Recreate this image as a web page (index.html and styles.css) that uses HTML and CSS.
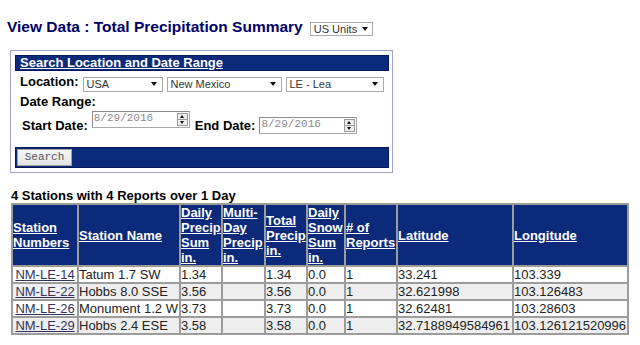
FILE: index.html
```html
<!DOCTYPE html>
<html lang="en">
<head>
<meta charset="utf-8">
<title>View Data : Total Precipitation Summary</title>
<link rel="stylesheet" href="styles.css">
</head>
<body>
<div class="title-row">
  <h1 class="title">View Data : Total Precipitation Summary</h1>
  <span class="sel sel-units">US Units<i class="arrow"></i></span>
</div>

<div class="search-box">
  <div class="box-head"><a href="#" class="head-link">Search Location and Date Range</a></div>
  <div class="row-loc">
    <span class="label">Location:</span>
    <span class="sel sel-country">USA<i class="arrow"></i></span>
    <span class="sel sel-state">New Mexico<i class="arrow"></i></span>
    <span class="sel sel-county">LE - Lea<i class="arrow"></i></span>
  </div>
  <div class="row-range"><span class="label">Date Range:</span></div>
  <div class="row-dates">
    <span class="label lbl-start">Start Date:</span>
    <span class="date date-start">8/29/2016<span class="spin"><i class="up"></i><i class="down"></i></span></span>
    <span class="label lbl-end">End Date:</span>
    <span class="date date-end">8/29/2016<span class="spin"><i class="up"></i><i class="down"></i></span></span>
  </div>
  <div class="box-foot"><button class="btn" type="button">Search</button></div>
</div>

<div class="count">4 Stations with 4 Reports over 1 Day</div>

<table class="data">
  <thead>
    <tr>
      <th class="c1"><a href="#">Station Numbers</a></th>
      <th class="c2"><a href="#">Station Name</a></th>
      <th class="c3"><a href="#">Daily Precip Sum in.</a></th>
      <th class="c4"><a href="#">Multi-Day Precip in.</a></th>
      <th class="c5"><a href="#">Total Precip in.</a></th>
      <th class="c6"><a href="#">Daily Snow Sum in.</a></th>
      <th class="c7"><a href="#"># of Reports</a></th>
      <th class="c8"><a href="#">Latitude</a></th>
      <th class="c9"><a href="#">Longitude</a></th>
    </tr>
  </thead>
  <tbody>
    <tr>
      <td class="num"><a href="#">NM-LE-14</a></td>
      <td>Tatum 1.7 SW</td>
      <td>1.34</td>
      <td></td>
      <td>1.34</td>
      <td>0.0</td>
      <td>1</td>
      <td>33.241</td>
      <td>103.339</td>
    </tr>
    <tr class="alt">
      <td class="num"><a href="#">NM-LE-22</a></td>
      <td>Hobbs 8.0 SSE</td>
      <td>3.56</td>
      <td></td>
      <td>3.56</td>
      <td>0.0</td>
      <td>1</td>
      <td>32.621998</td>
      <td>103.126483</td>
    </tr>
    <tr>
      <td class="num"><a href="#">NM-LE-26</a></td>
      <td>Monument 1.2 W</td>
      <td>3.73</td>
      <td></td>
      <td>3.73</td>
      <td>0.0</td>
      <td>1</td>
      <td>32.62481</td>
      <td>103.28603</td>
    </tr>
    <tr class="alt">
      <td class="num"><a href="#">NM-LE-29</a></td>
      <td>Hobbs 2.4 ESE</td>
      <td>3.58</td>
      <td></td>
      <td>3.58</td>
      <td>0.0</td>
      <td>1</td>
      <td>32.7188949584961</td>
      <td>103.126121520996</td>
    </tr>
  </tbody>
</table>
</body>
</html>
```

FILE: styles.css
```css
html, body {
  margin: 0;
  padding: 0;
  background: #ffffff;
}
body {
  font-family: "Liberation Sans", Arial, sans-serif;
  color: #000;
}

/* title */
.title-row {
  display: flex;
  align-items: flex-start;
  margin: 18px 0 0 7px;
  height: 18px;
}
.title {
  margin: 0;
  font-size: 15.5px;
  line-height: 18px;
  font-weight: bold;
  color: #000066;
  white-space: nowrap;
}

/* fake selects */
.sel {
  position: relative;
  display: block;
  box-sizing: border-box;
  height: 15px;
  border: 1px solid #a9a9a9;
  background: #fff;
  font-size: 11px;
  line-height: 13px;
  color: #333;
  padding-left: 3px;
  white-space: nowrap;
}
.sel .arrow {
  position: absolute;
  right: 5px;
  top: 4px;
  width: 0;
  height: 0;
  border-left: 3px solid transparent;
  border-right: 3px solid transparent;
  border-top: 4px solid #111;
}
.sel-units {
  margin: 4px 0 0 7px;
  width: 63px;
  height: 14px;
  line-height: 12px;
}
.sel-units .arrow { top: 4px; right: 4px; }
.sel-country { width: 80px; }
.sel-state { width: 115px; }
.sel-county { width: 98px; }

/* search box */
.search-box {
  margin: 14px 0 0 10px;
  width: 383px;
  box-sizing: border-box;
  border: 1px solid #a2a2c6;
  padding: 4px 3px 4px 4px;
}
.box-head {
  box-sizing: border-box;
  height: 16px;
  background: #0c2a7a;
  border: 1px solid #06185a;
  padding-left: 4px;
}
.head-link {
  color: #fff;
  font-size: 13px;
  line-height: 13px;
  font-weight: bold;
  text-decoration: underline;
  display: block;
}
.label {
  font-size: 13px;
  line-height: 15px;
  font-weight: bold;
  white-space: nowrap;
}
.row-loc {
  display: flex;
  align-items: flex-start;
  gap: 4px;
  height: 21px;
  padding-left: 5px;
}
.row-loc .label { margin-top: 3px; }
.row-loc .sel { margin-top: 6px; }
.row-range {
  height: 16px;
  padding-left: 5px;
}
.row-dates {
  display: flex;
  align-items: flex-start;
  height: 39px;
  padding-left: 7px;
}
.row-dates .label { margin-top: 10px; }
.lbl-end { margin-left: 5px; }

/* fake date inputs */
.date {
  position: relative;
  display: block;
  box-sizing: border-box;
  width: 98px;
  height: 17px;
  margin-left: 4px;
  border: 1px solid #a9a9a9;
  border-top-color: #8a8a8a;
  border-left-color: #8a8a8a;
  background: #fff;
  font-family: "Liberation Mono", "Courier New", monospace;
  font-size: 11px;
  line-height: 13px;
  color: #8a8a8a;
  padding-left: 1px;
}
.date-start { margin-top: 3px; }
.date-end { margin-top: 9px; }
.spin {
  position: absolute;
  right: 1px;
  top: 1px;
  width: 11px;
  height: 13px;
  display: flex;
  flex-direction: column;
  border: 1px solid #9a9a9a;
  box-sizing: border-box;
  background: #ececec;
}
.spin i {
  flex: 1;
  position: relative;
}
.spin .up { border-bottom: 1px solid #9a9a9a; }
.spin .up::after,
.spin .down::after {
  content: "";
  position: absolute;
  left: 2px;
  top: 1px;
  width: 0;
  height: 0;
  border-left: 2px solid transparent;
  border-right: 2px solid transparent;
}
.spin .up::after { border-bottom: 3px solid #111; }
.spin .down::after { border-top: 3px solid #111; top: 1px; }

/* footer bar */
.box-foot {
  box-sizing: border-box;
  height: 21px;
  background: #0c2a7a;
  border: 1px solid #06185a;
  padding: 1px;
}
.btn {
  display: block;
  box-sizing: border-box;
  width: 55px;
  height: 17px;
  margin: 0;
  padding: 0;
  border: 1px solid #a0a0a0;
  background: linear-gradient(#f6f6f6, #e4e4e4);
  font-family: "Liberation Mono", "Courier New", monospace;
  font-size: 11px;
  line-height: 15px;
  color: #555;
  text-align: center;
}

/* stations table */
.count {
  margin: 15px 0 0 11px;
  font-size: 13px;
  line-height: 15px;
  font-weight: bold;
}
.data {
  margin-left: 11px;
  width: 618px;
  table-layout: fixed;
  border-collapse: separate;
  border-spacing: 0;
  border: 1px solid #9c9c9c;
  font-size: 13px;
  line-height: 15px;
}
.data th,
.data td {
  box-sizing: border-box;
  padding: 0;
  border: 1px solid #9c9c9c;
  white-space: normal;
}
.data th {
  background: #0c2a7a;
  text-align: left;
  vertical-align: middle;
  font-weight: bold;
}
.data th a {
  color: #fff;
  text-decoration: underline;
}
.data td {
  color: #222;
  background: #fff;
  white-space: nowrap;
  overflow: visible;
}
.data tr.alt td { background: #eeeeee; }
.data td.num { text-align: center; }
.data td.num a {
  color: #33335e;
  text-decoration: underline;
}
.c1 { width: 66px; }
.c2 { width: 102px; }
.c3 { width: 42px; }
.c4 { width: 43px; }
.c5 { width: 42px; }
.c6 { width: 38px; }
.c7 { width: 52px; }
.c8 { width: 116px; }
.c9 { width: 115px; }
```
